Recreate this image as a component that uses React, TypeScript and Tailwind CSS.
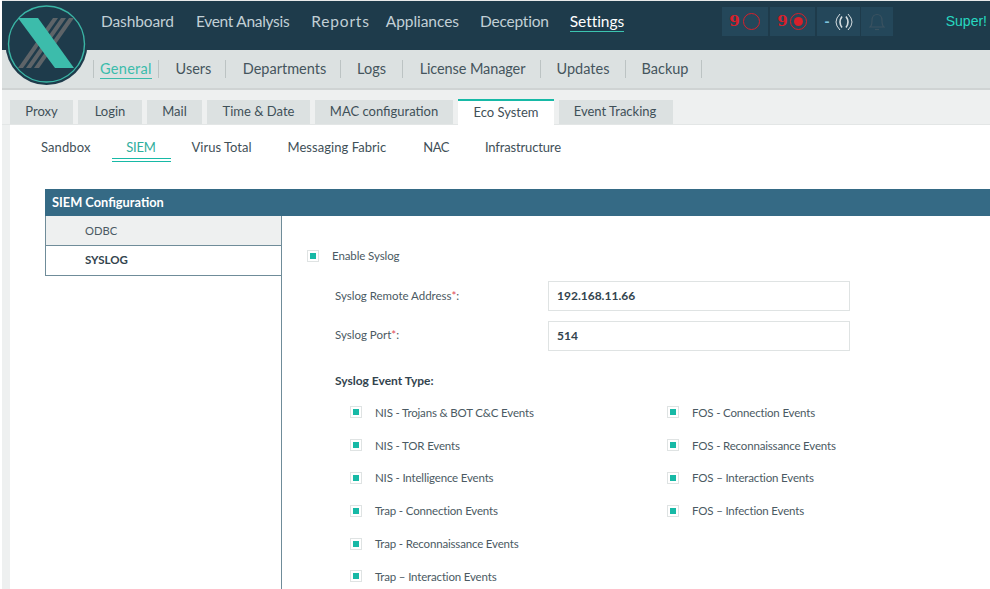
import React from "react";

const font = { fontFamily: '"Lato", "Noto Sans", sans-serif' };

function Logo() {
  return (
    <svg viewBox="0 0 84 84" className="w-[84px] h-[84px]">
      <circle cx="42.5" cy="42" r="41" fill="#1e3b4b" />
      <circle cx="42.5" cy="42" r="38" fill="#1e3b4b" stroke="#3ab5a5" strokeWidth="1.4" />
      <g fill="#5e6468">
        <polygon points="49,16 54,16 19,66 14,66" />
        <polygon points="57,16 62,16 27,66 22,66" />
        <polygon points="65,16 70,16 35,66 30,66" />
      </g>
      <polygon points="14,16 34,16 70,66 51,66" fill="#3cbcab" />
    </svg>
  );
}

function Check() {
  return (
    <span className="w-[12px] h-[12px] border border-[#dfe3e3] bg-white flex items-center justify-center shrink-0">
      <span className="w-[6px] h-[6px] bg-[#17b9a6]" />
    </span>
  );
}

function Ev({ t }: { t: string }) {
  return (
    <div className="h-[32.8px] flex items-center text-[11.5px] tracking-[-0.17px] text-[#4b5a63]">
      <Check />
      <span className="ml-[13px]">{t}</span>
    </div>
  );
}

const topNav = [
  ["Dashboard", "mr-[22px] tracking-[-0.1px]"],
  ["Event Analysis", "mr-[22px] tracking-[-0.3px]"],
  ["Reports", "mr-[16px] tracking-[0.8px]"],
  ["Appliances", "mr-[21px] tracking-[-0.05px]"],
  ["Deception", "mr-[21px] tracking-[-0.2px]"],
];
const sub = [
  ["Users", "w-[67px] pl-[3px]"],
  ["Departments", "w-[115px] pl-[3px]"],
  ["Logs", "w-[62px]"],
  ["License Manager", "w-[138px] pl-[2px] tracking-[-0.1px]"],
  ["Updates", "w-[85px]"],
  ["Backup", "w-[76px] pl-[3px]"],
];
const tabs = [
  ["Proxy", "w-[63px]"],
  ["Login", "w-[64px]"],
  ["Mail", "w-[55px]"],
  ["Time & Date", "w-[103px]"],
  ["MAC configuration", "w-[138px]"],
];

export default function App() {
  return (
    <div className="w-[990px] h-[589px] overflow-hidden relative bg-white" style={font}>
      <div className="absolute left-[4px] top-[2px] z-10">
        <Logo />
      </div>

      <header className="ml-[2px] h-[50px] bg-[#1e3b4b] flex items-center pl-[99px] pb-[8px] border-t border-[#e8eaea]">
        {topNav.map(([t, c]) => (
          <span key={t} className={`${c} text-[15.5px] text-[#c2d0d6]`}>{t}</span>
        ))}
        <span className="text-[15.5px] text-white border-b border-[#3cc4b0] leading-[20px] tracking-[-0.05px]">Settings</span>
        <div className="ml-[98px] flex h-[29px] text-[#d8202a] font-bold text-[15px]">
          <div className="w-[46px] mr-[2px] bg-[#24475a] flex items-center pl-[7px]">
            <span className="w-[14px]" style={{ fontFamily: '"DejaVu Serif", serif' }}>9</span>
            <span className="w-[17px] h-[17px] rounded-full border-[1.5px] border-[#d8202a]" />
          </div>
          <div className="w-[45px] mr-[2px] bg-[#24475a] flex items-center pl-[7px]">
            <span className="w-[13px]" style={{ fontFamily: '"DejaVu Serif", serif' }}>9</span>
            <span className="w-[17px] h-[17px] rounded-full border border-[#d8202a] flex items-center justify-center">
              <span className="w-[9px] h-[9px] rounded-full bg-[#d8202a]" />
            </span>
          </div>
          <div className="w-[43px] mr-[1px] bg-[#24475a] flex items-center pl-[7px] text-[#7fc4de]">
            <span className="w-[11px]">-</span>
            <svg width="18" height="18" viewBox="0 0 18 18" fill="none" stroke="#d5dde0" strokeWidth="1">
              <path d="M7 3.5 Q3 9 7 14.5" strokeWidth="1.6" />
              <path d="M11 3.5 Q15 9 11 14.5" strokeWidth="1.6" />
              <path d="M5 1 Q-3 9 5 17" />
              <path d="M13 1 Q21 9 13 17" />
            </svg>
          </div>
          <div className="w-[32px] bg-[#24475a] flex items-center justify-center">
            <svg width="16" height="18" viewBox="0 0 16 18" fill="none" stroke="#3a5260" strokeWidth="1.2">
              <path d="M1 14 C3 12.5 3 10 3 7.5 C3 3.5 5.5 1.5 8 1.5 C10.5 1.5 13 3.5 13 7.5 C13 10 13 12.5 15 14 Z" />
              <path d="M6 16.5 H10" />
            </svg>
          </div>
        </div>
        <span className="ml-auto pr-[3px] text-[14px] text-[#27d8c0]" style={{ fontFamily: '"Liberation Sans", sans-serif' }}>Super!</span>
      </header>

      <nav className="ml-[2px] h-[40px] bg-[#dce1e1] flex items-center pl-[91px] text-[14.5px] text-[#45555d] border-b-2 border-[#cfd3d3]">
        <div className="w-[66px] h-[18px] border-x border-[#bcc3c3] flex items-center pl-[6px]">
          <span className="text-[#3bbcab] border-b border-[#3bbcab] leading-[19px] tracking-[0.3px]">General</span>
        </div>
        {sub.map(([t, c]) => (
          <div key={t} className={`${c} h-[18px] border-r border-[#bcc3c3] flex items-center justify-center`}>{t}</div>
        ))}
      </nav>

      <div className="ml-[2px] h-[35px] bg-[#eef0f0] flex items-end pl-[8px] gap-[5px] text-[13px] text-[#3f5058] border-b border-[#e3e6e6]">
        {tabs.map(([t, c]) => (
          <div key={t} className={`${c} h-[24px] bg-[#dce1e1] flex items-center justify-center`}>{t}</div>
        ))}
        <div className="w-[96px] h-[26px] bg-white border-t-[2px] border-[#17b9a6] flex items-center justify-center -mb-px">Eco System</div>
        <div className="w-[114px] h-[24px] bg-[#dce1e1] flex items-center justify-center pr-[2px]">Event Tracking</div>
      </div>

      <div className="ml-[10px] bg-white relative h-[464px]">
        <div className="absolute -left-[8px] top-0 bottom-0 w-[8px] bg-[#eef0f0]" />
        <div className="flex pl-[31px] pt-[11px] text-[13px] text-[#3f5058] h-[64px]">
          <span className="mr-[21px] leading-[22px] tracking-[0.1px]">Sandbox</span>
          <span className="w-[59px] h-[26px] mr-[21px] border-b-[4px] border-double border-[#17b9a6] text-center leading-[22px] text-[#2fae9d] tracking-[-0.2px]">SIEM</span>
          <span className="mr-[36px] leading-[22px]">Virus Total</span>
          <span className="mr-[37px] leading-[22px] tracking-[0.05px]">Messaging Fabric</span>
          <span className="mr-[36px] leading-[22px] tracking-[-0.5px]">NAC</span>
          <span className="leading-[22px] tracking-[-0.15px]">Infrastructure</span>
        </div>

        <section className="ml-[35px]">
          <div className="h-[27px] bg-[#356a85] text-white font-bold text-[12.8px] flex items-center pl-[7px]">SIEM Configuration</div>
          <div className="flex">
            <aside className="w-[237px] h-[400px] border-r border-[#6f8c99] shrink-0">
              <div className="h-[30px] bg-[#eef0f0] border-l border-b border-[#6f8c99] flex items-center pl-[39px] pt-[1px] text-[11.2px] text-[#4b5a63]">ODBC</div>
              <div className="h-[30px] bg-white border-l border-b border-[#6f8c99] flex items-center pl-[39px] pb-[2px] text-[11.5px] font-bold text-[#33444e]">SYSLOG</div>
            </aside>
            <div className="flex-1 pl-[25px] pt-[34px] text-[12px] text-[#4b5a63]">
              <div className="flex items-center h-[12px] text-[11.5px] tracking-[-0.1px]">
                <Check />
                <span className="ml-[13px]">Enable Syslog</span>
              </div>
              <div className="pl-[28px]">
                <div className="flex items-center mt-[19px]">
                  <span className="w-[213px] text-[11.5px] tracking-[-0.02px]">Syslog Remote Address<span className="text-[#e04a5a]">*</span>:</span>
                  <div className="w-[302px] h-[30px] border border-[#dfe3e3] flex items-center pl-[8px] font-bold text-[#33444e]">192.168.11.66</div>
                </div>
                <div className="flex items-center mt-[10px]">
                  <span className="w-[213px] text-[11.5px] pb-[2px]">Syslog Port<span className="text-[#e04a5a]">*</span>:</span>
                  <div className="w-[302px] h-[30px] border border-[#dfe3e3] flex items-center pl-[8px] font-bold text-[#33444e]">514</div>
                </div>
                <div className="font-bold text-[#33444e] mt-[21px] leading-[18px]">Syslog Event Type:</div>
                <div className="flex mt-[6px] pl-[15px]">
                  <div className="w-[317px]">
                    <Ev t="NIS - Trojans & BOT C&C Events" />
                    <Ev t="NIS - TOR Events" />
                    <Ev t="NIS - Intelligence Events" />
                    <Ev t="Trap - Connection Events" />
                    <Ev t="Trap - Reconnaissance Events" />
                    <Ev t="Trap – Interaction Events" />
                  </div>
                  <div>
                    <Ev t="FOS - Connection Events" />
                    <Ev t="FOS - Reconnaissance Events" />
                    <Ev t="FOS – Interaction Events" />
                    <Ev t="FOS – Infection Events" />
                  </div>
                </div>
              </div>
            </div>
          </div>
        </section>
      </div>
    </div>
  );
}
